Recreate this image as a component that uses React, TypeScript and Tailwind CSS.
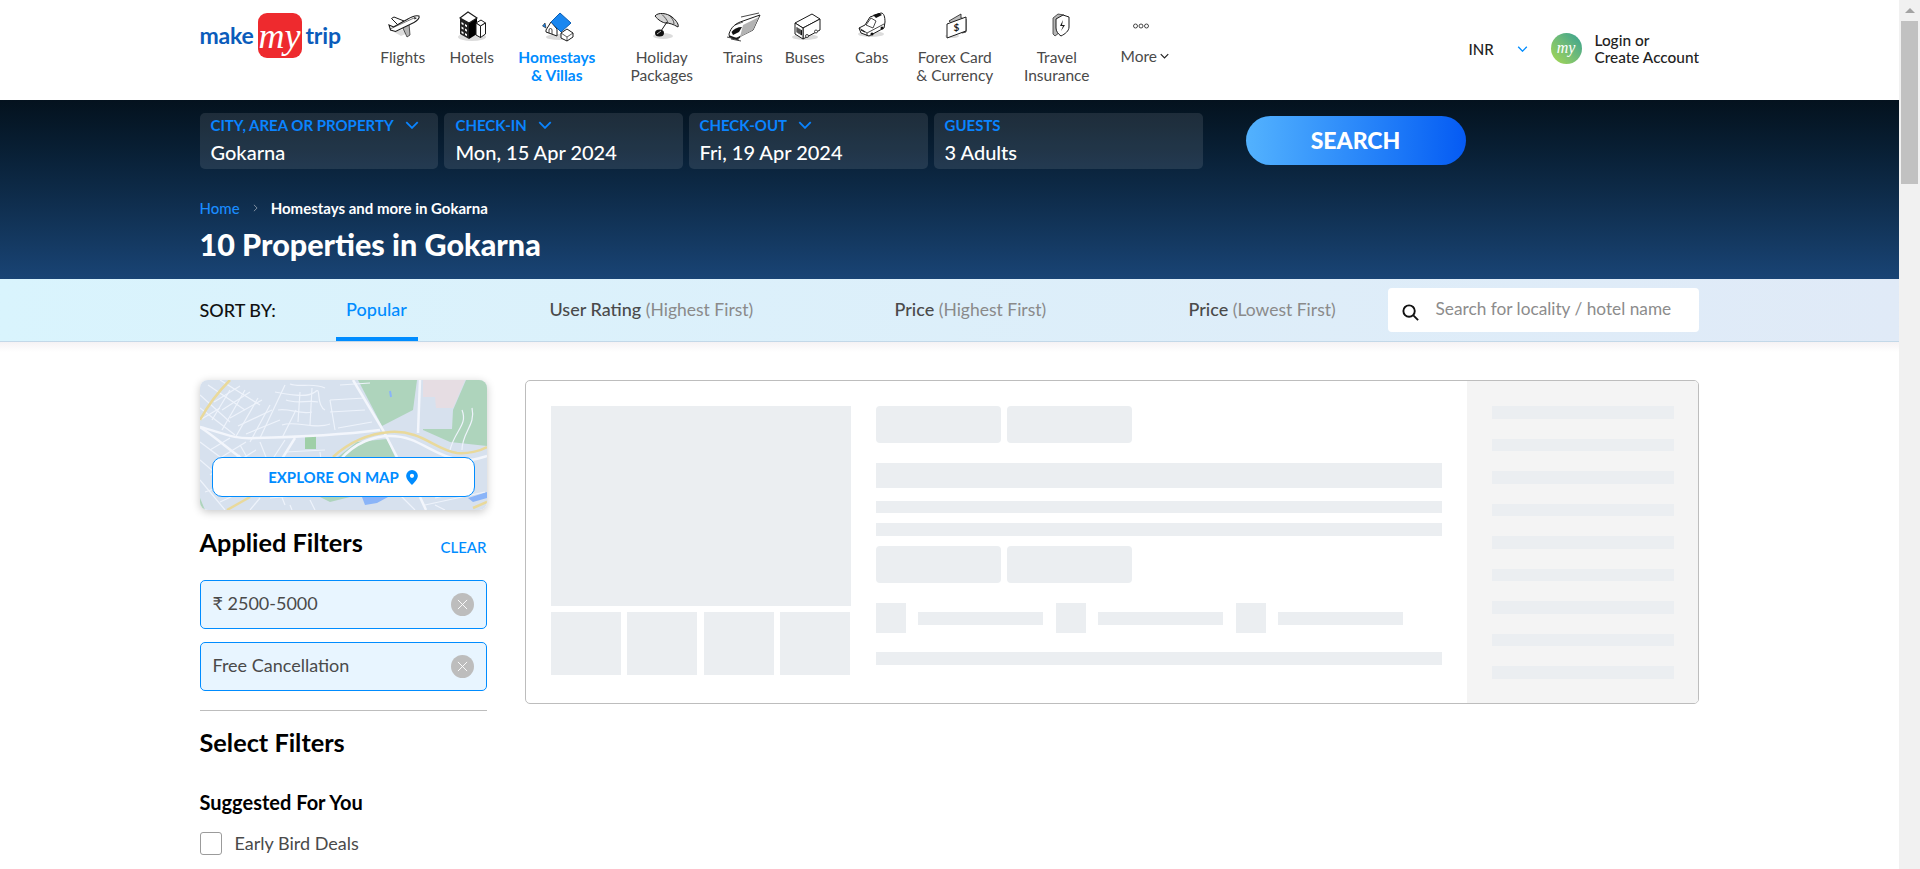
import React from 'react';

const ink = '#1a1a1a';

const Shadow = ({ cx, cy, rx = 12, ry = 3 }: { cx: number; cy: number; rx?: number; ry?: number }) => (
  <ellipse cx={cx} cy={cy} rx={rx} ry={ry} fill="#dcdcdc" />
);

const FlightIcon = () => (
  <svg viewBox="0 0 40 30" className="h-[30px] w-[40px] overflow-visible">
    <path d="M11 20l11-3 5 3-9 4z" fill="#dcdcdc" />
    <path d="M26 12l1 11-3 2-5-11z" fill="#b5b5b5" stroke={ink} strokeWidth="0.7" />
    <path d="M21 9L11 5 8.500 6.500 15 13z" fill="#fff" stroke={ink} strokeWidth="1" />
    <path d="M36 4c-3-1-8 1-12 3.500L10.500 15 6 13l1.500 5 5 1.500L31 10.500c3-1.500 6-4.500 5-6.500z" fill="#fff" stroke={ink} strokeWidth="1.100" />
    <path d="M7 17l24-11" stroke={ink} strokeWidth="0.6" />
    <path d="M31 5l3 1-2.500 1.500z" fill={ink} />
  </svg>
);

const HotelIcon = () => (
  <svg viewBox="0 0 40 30" className="h-[30px] w-[40px] overflow-visible">
    <Shadow cx={20} cy={25} rx={14} ry={4} />
    <path d="M8 6l9 5v16l-9-5z" fill="#222" />
    <path d="M17 11l8-5v16l-8 5z" fill="#000" />
    <path d="M8 6l8-6 9 6-8 5z" fill="#fff" stroke={ink} strokeWidth="1.100" />
    {[10, 14.500, 19].map(y => (
      <g key={y} fill="#fff">
        <path d={`M9.500 ${y}l2 1.200v2l-2-1.200z`} />
        <path d={`M13 ${y + 2}l2 1.200v2l-2-1.200z`} />
      </g>
    ))}
    <path d="M24 11l5-3 4.500 3-5 3z" fill="#fff" stroke={ink} strokeWidth="1" />
    <path d="M28.500 14l5-3v11l-5 3.500zM24 11l4.500 3v11.500L24 23z" fill="#fff" stroke={ink} strokeWidth="1" />
  </svg>
);

const HomeIcon = () => (
  <svg viewBox="0 0 40 30" className="h-[30px] w-[40px] overflow-visible">
    <Shadow cx={22} cy={25} rx={13} ry={3} />
    <path d="M9 18l5-8 6 7v7l-11-4z" fill="#fff" stroke={ink} strokeWidth="1" />
    <path d="M5.500 14l2.500-3 1 5z" fill="#1b86ee" stroke={ink} strokeWidth="0.6" />
    <path d="M14 10L23 1l11 10-10 9z" fill="#1a87f0" stroke="#0b5fb5" strokeWidth="1" />
    <path d="M24 21l6-4 6 4v4l-6 4-6-3z" fill="#fff" stroke={ink} strokeWidth="1" />
    <path d="M24 21l6 4 6-4M30 25v4" fill="none" stroke={ink} strokeWidth="0.7" />
    <path d="M12 21v-3a1.500 1.500 0 013 0v4" fill="none" stroke={ink} strokeWidth="0.8" />
  </svg>
);

const HolidayIcon = () => (
  <svg viewBox="0 0 40 30" className="h-[30px] w-[40px] overflow-visible">
    <Shadow cx={21} cy={24} rx={10} ry={3} />
    <path d="M13 4c3-4 12-3 17 1s7 8 6 10c-5-3-9-4-12-4s-8-3-11-7z" fill="#d4d4d4" stroke={ink} strokeWidth="1" />
    <path d="M20 2.500c3 3 5 5 6 8.500M27 3c3 3 5 6 5 9" fill="none" stroke={ink} strokeWidth="0.7" />
    <path d="M25 10l-6 9" stroke={ink} strokeWidth="1" />
    <ellipse cx="17.500" cy="21" rx="4.500" ry="3.600" fill="#111" />
    <path d="M15 22l4-3" stroke="#fff" strokeWidth="0.7" />
  </svg>
);

const TrainIcon = () => (
  <svg viewBox="0 0 40 30" className="h-[30px] w-[40px] overflow-visible">
    <path d="M4 25l12 3M8 27l10 2" stroke={ink} strokeWidth="0.8" />
    <path d="M18 5L36 1" stroke={ink} strokeWidth="0.8" />
    <path d="M6 22c2-7 7-11 14-13L37 3l-7 15-16 8c-4 1-8 0-8-4z" fill="#fff" stroke={ink} strokeWidth="1" />
    <path d="M20 13l16-8-6 13-13 7z" fill="#b3b3b3" />
    <path d="M8.500 20c2-3 6-5 10.500-5l-3 5-6 3z" fill="#111" />
    <path d="M12 13l8-3" stroke={ink} strokeWidth="0.7" />
    <path d="M6 24l8 3 3-2" fill="none" stroke={ink} strokeWidth="1.500" />
  </svg>
);

const BusIcon = () => (
  <svg viewBox="0 0 40 30" className="h-[30px] w-[40px] overflow-visible">
    <Shadow cx={20} cy={25} rx={13} ry={3} />
    <path d="M10 11L27 2l8 5-17 9z" fill="#fff" stroke={ink} strokeWidth="1" />
    <path d="M18 16l17-9v11l-17 9z" fill="#fff" stroke={ink} strokeWidth="1" />
    <path d="M10 11l8 5v11l-8-5z" fill="#fff" stroke={ink} strokeWidth="1" />
    <path d="M11.500 15l5.500 3.200v5.300l-5.500-3.200z" fill="#111" />
    <path d="M13 16v5M15 17v5" stroke="#fff" strokeWidth="0.6" />
    <circle cx="22" cy="24" r="1.500" fill="#fff" stroke={ink} strokeWidth="0.8" />
    <circle cx="31" cy="19.500" r="1.500" fill="#fff" stroke={ink} strokeWidth="0.8" />
  </svg>
);

const CabIcon = () => (
  <svg viewBox="0 0 40 30" className="h-[30px] w-[40px] overflow-visible">
    <Shadow cx={19} cy={22} rx={13} ry={3} />
    <path d="M7 16l6-3 5-8 11-4c3 0 4 4 4 9l-1 6-15 8-8-3z" fill="#fff" stroke={ink} strokeWidth="1" />
    <path d="M14 13l5-7 5 3-3 7z" fill="#fff" stroke={ink} strokeWidth="0.8" />
    <path d="M21 3l6-2 3 2-6 3z" fill="#111" />
    <path d="M7 16l8 5v3M15 21l17-9" fill="none" stroke={ink} strokeWidth="0.8" />
    <path d="M9 18l4 2" stroke={ink} strokeWidth="1.200" />
    <circle cx="20" cy="22" r="1.500" fill="#111" />
    <circle cx="30" cy="16" r="1.500" fill="#111" />
  </svg>
);

const ForexIcon = () => (
  <svg viewBox="0 0 40 30" className="h-[30px] w-[40px] overflow-visible">
    <Shadow cx={17} cy={24} rx={7} ry={2} />
    <path d="M14 9l12-7v4l5 1v13l-4 1z" fill="#bdbdbd" stroke={ink} strokeWidth="0.8" />
    <path d="M12 12l19-7v14l-19 7z" fill="#fff" stroke={ink} strokeWidth="1" />
    <text x="21.500" y="19" fontSize="10" fontWeight="700" fill={ink} textAnchor="middle" fontFamily="Lato, sans-serif">$</text>
  </svg>
);

const InsuranceIcon = () => (
  <svg viewBox="0 0 40 30" className="h-[30px] w-[40px] overflow-visible">
    <path d="M16 6l5-4 6 1v14l-9 7-2-2z" fill="#b5b5b5" stroke={ink} strokeWidth="0.7" />
    <path d="M19 7l7-4 6 2v10c0 4-4 7-8 9-3-2-5-5-5-8z" fill="#fff" stroke={ink} strokeWidth="1" />
    <path d="M26 8l-3 6h3l-2 5 4-6h-3z" fill={ink} />
  </svg>
);

const MoreIcon = () => (
  <svg viewBox="0 0 40 30" className="h-[30px] w-[40px] -translate-x-[4px]">
    {[14.500, 20, 25.500].map(x => (
      <circle key={x} cx={x} cy="14" r="2" fill="#fff" stroke="#333" strokeWidth="0.9" />
    ))}
  </svg>
);

const navItems = [
  { label: ['Flights'], w: 'w-[44px]', icon: <FlightIcon /> },
  { label: ['Hotels'], w: 'w-[94px]', icon: <HotelIcon /> },
  { label: ['Homestays', '& Villas'], w: 'w-[76px]', icon: <HomeIcon />, active: true },
  { label: ['Holiday', 'Packages'], w: 'w-[134px]', icon: <HolidayIcon /> },
  { label: ['Trains'], w: 'w-[28px]', icon: <TrainIcon /> },
  { label: ['Buses'], w: 'w-[96px]', icon: <BusIcon /> },
  { label: ['Cabs'], w: 'w-[38px]', icon: <CabIcon /> },
  { label: ['Forex Card', '& Currency'], w: 'w-[128px]', icon: <ForexIcon /> },
  { label: ['Travel', 'Insurance'], w: 'w-[76px]', icon: <InsuranceIcon /> },
];

const Chevron = ({ className }: { className: string }) => (
  <svg viewBox="0 0 12 7" className={className} fill="none" stroke="currentColor" strokeWidth="1.600">
    <path d="M1 1l5 5 5-5" />
  </svg>
);

function Header() {
  return (
    <header className="h-[100px] bg-white">
      <div className="mx-auto flex h-full w-[1500px]">
        <div className="mt-[13px] flex h-[45px] items-center">
          <span className="w-[58px] text-[23px] font-bold tracking-[-0.2px] text-[#0b5cbb]">make</span>
          <div className="flex h-[45px] w-[44px] items-center justify-center rounded-[9px] bg-[#ee2a2e]">
            <span className="font-['Liberation_Serif'] text-[36px] leading-none text-white italic">my</span>
          </div>
          <span className="ml-[4px] text-[23px] font-bold tracking-[-0.2px] text-[#0b5cbb]">trip</span>
        </div>
        <nav className="ml-[40px] flex shrink-0 pt-[12px]">
          {navItems.map(item => (
            <div key={item.label[0]} className={`${item.w} flex flex-col items-center`}>
              {item.icon}
              <div className={`mt-[6px] text-center text-[15.5px] leading-[18px] whitespace-nowrap ${item.active ? 'font-bold text-[#008cff]' : 'text-[#4a4a4a]'}`}>
                {item.label.map(line => (
                  <div key={line}>{line}</div>
                ))}
              </div>
            </div>
          ))}
          <div className="flex w-[100px] flex-col items-center">
            <MoreIcon />
            <div className="mt-[5px] flex items-center gap-[3px] text-[15.5px] leading-[18px] text-[#4a4a4a]">
              More
              <Chevron className="h-[6px] w-[9px] text-[#222]" />
            </div>
          </div>
        </nav>
        <div className="ml-auto flex items-center pb-[2px]">
          <span className="w-[48px] text-[15px] font-medium text-[#222]">INR</span>
          <Chevron className="h-[6px] w-[11px] text-[#008cff]" />
          <div className="ml-[23px] flex h-[31px] w-[31px] -translate-y-[1px] items-center justify-center rounded-full bg-linear-to-tr from-[#a8d948] to-[#2f9f8f]">
            <span className="font-['Liberation_Serif'] text-[16px] leading-none text-white italic">my</span>
          </div>
          <div className="ml-[13px] w-[105px] text-[15.4px] leading-[17px] font-medium text-[#222]">
            <div>Login or</div>
            <div className="whitespace-nowrap">Create Account</div>
          </div>
        </div>
      </div>
    </header>
  );
}

const fields = [
  { label: 'CITY, AREA OR PROPERTY', value: 'Gokarna', w: 'w-[238px]', pad: 'pl-[11px]', chevron: true },
  { label: 'CHECK-IN', value: 'Mon, 15 Apr 2024', w: 'w-[239px]', pad: 'pl-[12px]', chevron: true },
  { label: 'CHECK-OUT', value: 'Fri, 19 Apr 2024', w: 'w-[239px]', pad: 'pl-[11px]', chevron: true },
  { label: 'GUESTS', value: '3 Adults', w: 'w-[269px]', pad: 'pl-[11px]', chevron: false },
];

function Hero() {
  return (
    <section className="h-[179px] bg-linear-to-b from-[#04121e] to-[#194475]">
      <div className="mx-auto w-[1500px] pt-[13px]">
        <div className="flex items-start gap-[6px]">
          {fields.map(f => (
            <div key={f.label} className={`${f.w} ${f.pad} h-[56px] rounded-[5px] bg-white/[0.1] pt-[3px]`}>
              <div className="flex items-center gap-[11px] text-[15px] leading-[18px] font-bold text-[#0a84ff]">
                {f.label}
                {f.chevron && <Chevron className="h-[8px] w-[14px]" />}
              </div>
              <div className="mt-[5px] text-[20px] leading-[26px] font-medium text-white">{f.value}</div>
            </div>
          ))}
          <button className="mt-[3px] ml-[37px] h-[49px] w-[220px] rounded-full bg-linear-to-r from-[#53b2fe] to-[#065af3] text-[23px] font-black text-white">
            SEARCH
          </button>
        </div>
        <div className="mt-[29px] flex items-center text-[15px] leading-[20px]">
          <span className="font-medium text-[#1a8cff]">Home</span>
          <svg viewBox="0 0 6 10" className="mx-[13px] h-[8px] w-[5px]" fill="none" stroke="#9aa7b5" strokeWidth="1">
            <path d="M1 1l4 4-4 4" />
          </svg>
          <span className="font-bold text-white">Homestays and more in Gokarna</span>
        </div>
        <h1 className="mt-[8px] text-[30.5px] leading-[36px] font-black text-white">10 Properties in Gokarna</h1>
      </div>
    </section>
  );
}

function SortBar() {
  return (
    <section className="h-[63px] border-b border-[#c3d8e8] bg-linear-to-r from-[#d9f4fd] to-[#e0eaf7]">
      <div className="mx-auto flex h-full w-[1500px] items-center">
        <span className="w-[136px] text-[18px] leading-none font-medium text-[#111]">SORT BY:</span>
        <div className="flex h-[62px] w-[82px] items-center justify-center border-b-4 border-[#008cff] pt-[3px] text-[18px] font-medium text-[#008cff]">
          Popular
        </div>
        <span className="ml-[132px] w-[345px] text-[18px] font-medium text-[#4a4a4a]">
          User Rating <span className="text-[17.5px] font-normal text-[#8a8a8a]">(Highest First)</span>
        </span>
        <span className="w-[294px] text-[18px] font-medium text-[#4a4a4a]">
          Price <span className="text-[17.5px] font-normal text-[#8a8a8a]">(Highest First)</span>
        </span>
        <span className="text-[18px] font-medium text-[#4a4a4a]">
          Price <span className="text-[17.5px] font-normal text-[#8a8a8a]">(Lowest First)</span>
        </span>
        <div className="mr-px ml-auto flex h-[44px] w-[311px] items-center rounded-[4px] bg-white pl-[13px]">
          <svg viewBox="0 0 20 20" className="h-[19px] w-[19px] translate-y-[2px]" fill="none" stroke="#111" strokeWidth="2">
            <circle cx="8.500" cy="8.500" r="6" />
            <path d="M13 13l5 5" />
          </svg>
          <span className="mb-[2px] ml-[16px] text-[17.25px] text-[#8c8c8c]">Search for locality / hotel name</span>
        </div>
      </div>
    </section>
  );
}

const mapStreets = [
  'M0 15L30 42M8 5L45 30M20 0L60 25M0 28L35 55M0 62L40 92M0 80L35 110M0 100L25 130',
  'M30 10L12 40M45 10L22 50M58 18L35 58M70 25L50 62M85 5L60 58M96 30L82 58',
  'M75 12C90 15 108 18 115 12C122 5 115 25 125 30M78 30C90 28 100 35 112 32M82 45C95 40 115 50 130 44',
  'M130 20L135 50M130 20L165 18M138 48L172 42M130 32L165 30M140 5L170 3',
  'M40 65L60 100M60 62L85 125M85 60L72 80M30 90L100 85M50 105L120 100M70 118L130 113M85 72L125 70',
  'M200 85L240 110M205 100L260 95M240 80L235 100M225 125L285 112M235 118L270 110',
  'M262 30C268 45 255 50 250 70M272 28C276 45 262 52 262 70',
  'M14 22L40 6M22 30L50 12M30 38L62 20M38 46L72 30M46 54L80 40M0 40L20 28',
  'M90 4C100 8 112 2 125 8M86 20C96 24 108 20 118 22M100 12L98 42M112 8L110 45',
  'M10 70L30 58M20 78L46 62M30 86L56 70M10 95L40 75M5 112L40 100M20 122L50 108',
  'M95 92L125 88M100 78L108 115M120 72L125 110M60 118L50 130M90 125L92 130M110 120L115 130',
  'M130 100L160 95M150 85L155 115M165 85L190 100M200 115L215 130M235 125L245 130',
];

function MapCard() {
  return (
    <div className="relative h-[130px] w-[287px] overflow-hidden rounded-[8px] shadow-[0_2px_8px_rgba(0,0,0,0.22)]">
      <svg viewBox="0 0 287 130" className="block h-[130px] w-[287px]">
        <rect width="287" height="130" fill="#d7e1ee" />
        <path d="M158 0H217L213 30L182 46Z" fill="#aed4bc" />
        <path d="M253 30L266 0H287V66L250 62L223 50V49H252Z" fill="#aed4bc" />
        <path d="M223 0H265L253 28H236L235 17H223Z" fill="#e6dde3" />
        <path d="M138 77L157 62L187 59L195 77Z" fill="#aed4bc" />
        <rect x="105" y="56" width="11" height="13" fill="#9fcfa8" />
        <path d="M120 117H150L130 122Z" fill="#aed4bc" />
        <path d="M0 118L5 130H0Z" fill="#aed4bc" />
        <path d="M162 117H188L177 123L165 125Z" fill="#8ab4f8" />
        <path d="M268 118L287 112V118L273 122Z" fill="#8ab4f8" />
        <path d="M190 11l1 6" stroke="#8ab4f8" strokeWidth="2" />
        <g fill="none" stroke="#eef3fb" strokeWidth="1.200">
          {mapStreets.map(d => (
            <path key={d} d={d} />
          ))}
        </g>
        <g fill="none" stroke="#f3f6fc" strokeWidth="2.500">
          <path d="M0 47C20 52 35 60 55 58C100 57 140 55 180 50" />
          <path d="M153 0L183 50L197 77" />
          <path d="M220 0L218 53" />
          <path d="M0 47C20 60 40 80 60 90" />
          <path d="M95 58L75 90" />
          <path d="M140 80C155 62 175 56 190 56C220 56 230 75 260 80C270 82 280 78 287 76" />
          <path d="M220 117L226 130" />
        </g>
        <g fill="none" stroke="#e9d99b" strokeWidth="2.500">
          <path d="M133 77C146 65 165 54 190 52C222 50 235 70 257 73C268 74 280 71 287 67" />
          <path d="M0 40C8 25 18 12 30 0" />
          <path d="M27 130L50 117" />
          <path d="M273 128L287 122" />
        </g>
      </svg>
      <div className="absolute top-[77px] left-[12px] flex h-[40px] w-[263px] items-center justify-center gap-[7px] rounded-[10px] border border-[#008cff] bg-white text-[15px] font-bold text-[#008cff]">
        EXPLORE ON MAP
        <svg viewBox="0 0 14 18" className="h-[15px] w-[12px]" fill="#008cff">
          <path fillRule="evenodd" d="M7 0a7 7 0 017 7c0 4-4 8-7 11C4 15 0 11 0 7a7 7 0 017-7zm0 4.500a2.500 2.500 0 100 5 2.500 2.500 0 000-5z" />
        </svg>
      </div>
    </div>
  );
}

const FilterChip = ({ text }: { text: string }) => (
  <div className="flex h-[49px] items-center justify-between rounded-[5px] border border-[#008cff] bg-[#e8f5ff] pr-[12px] pl-[12px] text-[18px] text-[#4a4a4a]">
    <span className="mb-[2px]">{text}</span>
    <span className="flex h-[23px] w-[23px] items-center justify-center rounded-full bg-[#bdbdbd]">
      <svg viewBox="0 0 12 12" className="h-[11px] w-[11px]" stroke="#fff" strokeWidth="1">
        <path d="M1 1l10 10M11 1L1 11" />
      </svg>
    </span>
  </div>
);

function Sidebar() {
  return (
    <aside className="w-[287px] shrink-0">
      <MapCard />
      <div className="mt-[15px] flex h-[34px] items-center justify-between">
        <h2 className="text-[25.3px] leading-[34px] font-bold text-black">Applied Filters</h2>
        <span className="mt-[11px] text-[15px] font-medium text-[#008cff]">CLEAR</span>
      </div>
      <div className="mt-[21px] flex flex-col gap-[13px]">
        <FilterChip text="₹ 2500-5000" />
        <FilterChip text="Free Cancellation" />
      </div>
      <div className="mt-[19px] h-px bg-[#bdbdbd]" />
      <h2 className="mt-[15px] text-[25.3px] leading-[32px] font-bold text-black">Select Filters</h2>
      <h3 className="mt-[31px] text-[20px] leading-[26px] font-bold text-black">Suggested For You</h3>
      <label className="mt-[15px] flex items-center">
        <span className="h-[23px] w-[22px] rounded-[3px] border border-[#9b9b9b] bg-white" />
        <span className="ml-[13px] text-[18px] text-[#4a4a4a]">Early Bird Deals</span>
      </label>
    </aside>
  );
}

const Bone = ({ className }: { className: string }) => <div className={`bg-[#ebeef1] ${className}`} />;

const Pills = () => (
  <div className="flex gap-[6px]">
    <Bone className="h-[37px] w-[125px] rounded-[4px]" />
    <Bone className="h-[37px] w-[125px] rounded-[4px]" />
  </div>
);

function SkeletonCard() {
  return (
    <div className="flex h-[324px] w-[1174px] overflow-hidden rounded-[5px] border border-[#bdbdbd]">
      <div className="w-[325px] shrink-0 pt-[25px] pl-[25px]">
        <Bone className="h-[200px] w-[300px]" />
        <div className="mt-[6px] flex gap-[6.500px]">
          {[0, 1, 2, 3].map(i => (
            <Bone key={i} className="h-[63px] w-[70px]" />
          ))}
        </div>
      </div>
      <div className="ml-[25px] w-[566px] shrink-0 pt-[25px]">
        <Pills />
        <Bone className="mt-[20px] h-[25px]" />
        <Bone className="mt-[13px] h-[12px]" />
        <Bone className="mt-[10px] h-[13px]" />
        <div className="mt-[10px]">
          <Pills />
        </div>
        <div className="mt-[20px] flex items-start">
          <Bone className="h-[30px] w-[30px]" />
          <Bone className="mt-[9px] ml-[12px] h-[13px] w-[125px]" />
          <Bone className="ml-[13px] h-[30px] w-[30px]" />
          <Bone className="mt-[9px] ml-[12px] h-[13px] w-[125px]" />
          <Bone className="ml-[13px] h-[30px] w-[30px]" />
          <Bone className="mt-[9px] ml-[12px] h-[13px] w-[125px]" />
        </div>
        <Bone className="mt-[19px] h-[13px]" />
      </div>
      <div className="ml-[25px] flex flex-1 flex-col gap-[20px] bg-[#f4f4f4] pt-[25px] pl-[25px]">
        {[0, 1, 2, 3, 4, 5, 6, 7, 8].map(i => (
          <Bone key={i} className="h-[12.500px] w-[182px]" />
        ))}
      </div>
    </div>
  );
}

function Scrollbar() {
  return (
    <div className="flex w-[21px] shrink-0 flex-col items-center bg-[#f1f1f1]">
      <div className="flex h-[21px] items-center justify-center">
        <span className="h-0 w-0 border-x-[5px] border-b-[5px] border-x-transparent border-b-[#a3a3a3]" />
      </div>
      <div className="h-[163px] w-[17px] bg-[#c1c1c1]" />
    </div>
  );
}

export default function App() {
  return (
    <div className="flex h-[869px] overflow-hidden bg-white font-['Lato','Noto_Sans',sans-serif]">
      <main className="min-w-0 flex-1 overflow-hidden">
        <Header />
        <Hero />
        <SortBar />
        <div className="h-[10px] bg-linear-to-b from-[#f5f2f4] to-white" />
        <div className="mx-auto mt-[28px] flex w-[1500px] gap-[38px]">
          <Sidebar />
          <SkeletonCard />
        </div>
      </main>
      <Scrollbar />
    </div>
  );
}
